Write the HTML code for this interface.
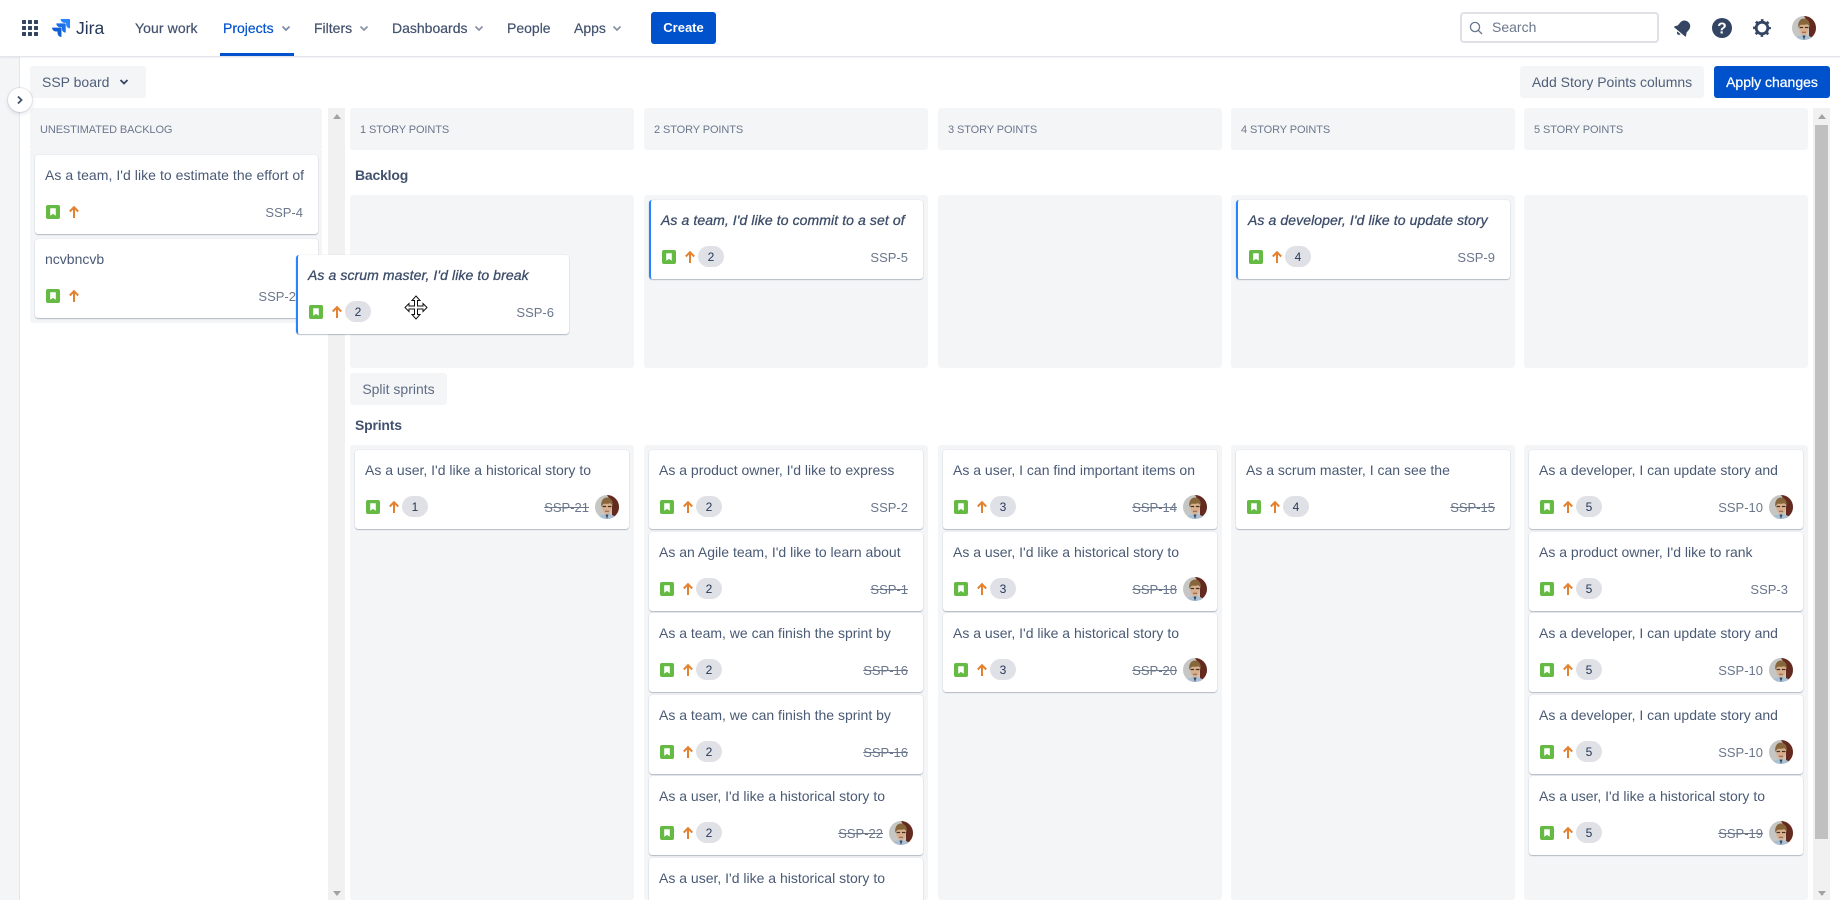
<!DOCTYPE html>
<html lang="en">
<head>
<meta charset="utf-8">
<title>Jira - SSP board</title>
<style>
*{box-sizing:border-box}
html,body{margin:0;padding:0;width:1840px;height:900px;overflow:hidden;background:#fff}
body{font-family:"Liberation Sans",Arial,sans-serif;color:#42526e;position:relative}
.a{position:absolute}
#stripe{left:0;top:56px;width:20px;height:844px;background:#f4f5f7;border-right:1px solid #e4e6ea}
#hdr{left:0;top:0;width:1840px;height:57px;background:#fff;border-bottom:1px solid #e3e5ea;box-shadow:0 1px 1px rgba(9,30,66,.06);z-index:5}
.nav{position:absolute;top:19px;font-size:14px;line-height:18px;font-weight:400;color:#42526e;white-space:nowrap;-webkit-text-stroke:.2px #42526e}
.chev{position:absolute;top:25px;width:10px;height:7px}
.btn{position:absolute;background:#f4f5f7;border-radius:3px;font-size:14px;color:#505f79;line-height:32px;white-space:nowrap}
.col{position:absolute;background:#f4f5f7;border-radius:3px;width:284px}
.ch{top:108px;height:42px;font-size:11px;line-height:45px;padding-left:10px;color:#6b778c;letter-spacing:-.1px;white-space:nowrap}
.sec{position:absolute;font-size:14px;font-weight:700;color:#42526e;line-height:18px;letter-spacing:-.2px}
.card{position:absolute;width:274px;height:79px;background:#fff;border-radius:3px;box-shadow:0 1px 1px rgba(9,30,66,.25),0 0 1px rgba(9,30,66,.2)}
.card .t{position:absolute;left:10px;top:11px;font-size:14px;line-height:19px;color:#4a5a75;white-space:nowrap}
.card .i{position:absolute;left:11px;top:50px;width:14px;height:14px}
.card .u{position:absolute;left:33px;top:50px;width:12px;height:14px}
.card .b{position:absolute;left:47px;top:46px;width:26px;height:21px;border-radius:11px;background:#dfe1e6;color:#253858;font-size:12px;line-height:22px;text-align:center}
.card .k{position:absolute;right:15px;top:49px;font-size:13px;line-height:18px;color:#6b778c;white-space:nowrap}
.card .k.s{text-decoration:line-through}
.card .k.w{right:40px}
.card .v{position:absolute;left:240px;top:45px;width:24px;height:24px}
.card.m{border-left:2px solid #2684ff}
.card.m .t{left:10px;font-style:italic;font-weight:400;color:#3d4d69;letter-spacing:.09px;-webkit-text-stroke:.3px #3d4d69}
.sb{position:absolute;top:108px;width:17px;height:792px;background:#f1f1f1}
.tri{position:absolute;left:5px;width:0;height:0;border-left:4px solid transparent;border-right:4px solid transparent}
</style>
</head>
<body>
<svg width="0" height="0" style="position:absolute">
<defs>
<g id="st"><rect width="14" height="14" rx="2" fill="#65ba43"/><path d="M4.2 3.2h5.6v7.6L7 8.9l-2.800 1.900z" fill="#fff"/></g>
<g id="up"><path d="M6 13V2.500M1.800 6.500L6 2.200l4.200 4.300" fill="none" stroke="#e4812f" stroke-width="2"/></g>
<clipPath id="cc"><circle cx="12" cy="12" r="12"/></clipPath>
<g id="av"><g clip-path="url(#cc)"><rect width="24" height="24" fill="#c6c6c4"/><path d="M12 0h12v24h-7V8z" fill="#642a20"/><path d="M3 24c.5-3.500 3.500-4.500 9-4.500s8 1.200 9 4.500z" fill="#a9c0d4"/><path d="M10.500 19.500h3L12 24z" fill="#3a4658"/><ellipse cx="12" cy="12.500" rx="4.700" ry="6.500" fill="#d9b08f"/><path d="M6.300 12C5.500 5.500 8.500 2.500 12 2.500s6.500 3 5.700 9.500c-.5-2.300-1.500-3.500-2.700-3.800-2.300.8-4.800.5-6.200.5-.8.800-2 1.800-2.500 3.300z" fill="#86663a"/><path d="M7.500 11.500h3.600M12.900 11.500h3.600" stroke="#43301f" stroke-width="1.300"/><path d="M10 16.200h4" stroke="#8d5a45" stroke-width="1"/></g></g>
</defs>
</svg>

<div id="stripe" class="a"></div>

<div id="hdr" class="a">
  <svg class="a" style="left:22px;top:20px" width="16" height="16" fill="#344563"><rect width="4" height="4" rx=".6"/><rect x="6" width="4" height="4" rx=".6"/><rect x="12" width="4" height="4" rx=".6"/><rect y="6" width="4" height="4" rx=".6"/><rect x="6" y="6" width="4" height="4" rx=".6"/><rect x="12" y="6" width="4" height="4" rx=".6"/><rect y="12" width="4" height="4" rx=".6"/><rect x="6" y="12" width="4" height="4" rx=".6"/><rect x="12" y="12" width="4" height="4" rx=".6"/></svg>
  <svg class="a" style="left:52px;top:19px" width="18" height="18" viewBox="0 0 24 24"><path fill="#2684ff" d="M23.013 0H11.455a5.215 5.215 0 0 0 5.215 5.215h2.129v2.057A5.215 5.215 0 0 0 24 12.483V1.005A1.001 1.001 0 0 0 23.013 0Z"/><path fill="#1a6fe6" d="M17.294 5.757H5.736a5.215 5.215 0 0 0 5.215 5.214h2.129v2.058a5.218 5.218 0 0 0 5.215 5.214V6.758a1.001 1.001 0 0 0-1.001-1.001z"/><path fill="#0f5fd8" d="M11.571 11.513H0a5.218 5.218 0 0 0 5.232 5.215h2.13v2.057A5.215 5.215 0 0 0 12.575 24V12.518a1.005 1.005 0 0 0-1.005-1.005z"/></svg>
  <div class="a" style="left:76px;top:15px;font-size:17.5px;line-height:26px;color:#253858">Jira</div>

  <div class="nav" style="left:135px;letter-spacing:.1px">Your work</div>
  <div class="nav" style="left:223px;color:#0052cc;-webkit-text-stroke:.2px #0052cc">Projects</div>
  <svg class="chev" style="left:281px" viewBox="0 0 10 7"><path d="M1.500 1.500L5 5l3.500-3.500" fill="none" stroke="#7d8ba8" stroke-width="1.700"/></svg>
  <div class="a" style="left:220px;top:53px;width:74px;height:3px;background:#0052cc"></div>
  <div class="nav" style="left:314px">Filters</div>
  <svg class="chev" style="left:359px" viewBox="0 0 10 7"><path d="M1.500 1.500L5 5l3.500-3.500" fill="none" stroke="#8993a4" stroke-width="1.700"/></svg>
  <div class="nav" style="left:392px">Dashboards</div>
  <svg class="chev" style="left:474px" viewBox="0 0 10 7"><path d="M1.500 1.500L5 5l3.500-3.500" fill="none" stroke="#8993a4" stroke-width="1.700"/></svg>
  <div class="nav" style="left:507px">People</div>
  <div class="nav" style="left:574px">Apps</div>
  <svg class="chev" style="left:612px" viewBox="0 0 10 7"><path d="M1.500 1.500L5 5l3.500-3.500" fill="none" stroke="#8993a4" stroke-width="1.700"/></svg>
  <div class="a" style="left:651px;top:12px;width:65px;height:32px;background:#0052cc;border-radius:3px;color:#fff;font-size:13px;font-weight:700;line-height:32px;text-align:center">Create</div>

  <div class="a" style="left:1460px;top:12px;width:199px;height:31px;border:2px solid #dfe1e6;border-radius:4px;background:#fff"></div>
  <svg class="a" style="left:1469px;top:21px" width="14" height="14" viewBox="0 0 14 14"><circle cx="6" cy="6" r="4.600" fill="none" stroke="#6b778c" stroke-width="1.300"/><path d="M9.400 9.400L13 13" stroke="#6b778c" stroke-width="1.300"/></svg>
  <div class="a" style="left:1492px;top:18px;font-size:14px;line-height:18px;color:#6b778c">Search</div>

  <svg class="a" style="left:1673px;top:18px" width="20" height="20" viewBox="0 0 24 24"><g transform="rotate(40 12 12)" fill="#344563"><path d="M12 2.500c-3.900 0-6.800 2.800-6.800 6.500v4.500L3 17v1.200h18V17l-2.200-3.500V9c0-3.700-2.900-6.500-6.800-6.500z"/><path d="M9.500 19.500a2.500 2.500 0 0 0 5 0z"/></g></svg>
  <svg class="a" style="left:1712px;top:18px" width="20" height="20" viewBox="0 0 20 20"><circle cx="10" cy="10" r="10" fill="#344563"/><text x="10" y="15.500" text-anchor="middle" font-family="Liberation Sans,sans-serif" font-size="15.500" font-weight="700" fill="#fff">?</text></svg>
  <svg class="a" style="left:1752px;top:18px" width="20" height="20" viewBox="0 0 20 20"><circle cx="10" cy="10" r="5.800" fill="none" stroke="#344563" stroke-width="2.800"/><circle cx="10" cy="10" r="7.800" fill="none" stroke="#344563" stroke-width="2.200" stroke-dasharray="2.600 3.526" stroke-dashoffset="1.300"/></svg>
  <svg class="a" style="left:1792px;top:16px" width="24" height="24" viewBox="0 0 24 24"><use href="#av"/></svg>
</div>

<div class="a" style="left:8px;top:88px;width:24px;height:24px;border-radius:50%;background:#fff;box-shadow:0 0 0 1px rgba(9,30,66,.08),0 2px 4px rgba(9,30,66,.12);z-index:6">
  <svg class="a" style="left:8px;top:7px" width="8" height="10" viewBox="0 0 8 10"><path d="M2 1.500L5.500 5 2 8.500" fill="none" stroke="#42526e" stroke-width="1.800"/></svg>
</div>

<div class="btn" style="left:30px;top:66px;width:116px;padding-left:12px">SSP board
  <svg class="a" style="left:89px;top:12px" width="10" height="8" viewBox="0 0 10 8"><path d="M1.500 2L5 5.500 8.500 2" fill="none" stroke="#344563" stroke-width="1.800"/></svg>
</div>
<div class="btn" style="left:1520px;top:66px;width:184px;text-align:center;color:#505f79">Add Story Points columns</div>
<div class="btn" style="left:1714px;top:66px;width:116px;background:#0052cc;color:#fff;text-align:center;-webkit-text-stroke:.25px #fff">Apply changes</div>

<!-- Scrollbars -->
<div class="sb" style="left:328px"><div class="tri" style="top:6px;border-bottom:5px solid #a3a3a3"></div><div class="tri" style="bottom:4px;border-top:5px solid #a3a3a3"></div></div>
<div class="sb" style="left:1813px"><div class="tri" style="top:6px;border-bottom:5px solid #a3a3a3"></div><div class="a" style="left:2px;top:17px;width:13px;height:714px;background:#c0c0c0"></div><div class="tri" style="bottom:4px;border-top:5px solid #a3a3a3"></div></div>

<!-- Column headers -->
<div class="col ch" style="left:30px;width:292px;padding-left:10px">UNESTIMATED BACKLOG</div>
<div class="col ch" style="left:350px">1 STORY POINTS</div>
<div class="col ch" style="left:644px">2 STORY POINTS</div>
<div class="col ch" style="left:938px">3 STORY POINTS</div>
<div class="col ch" style="left:1231px">4 STORY POINTS</div>
<div class="col ch" style="left:1524px">5 STORY POINTS</div>

<!-- Unestimated column body -->
<div class="col" style="left:30px;top:150px;width:292px;height:173px;border-radius:0 0 3px 3px"></div>
<div class="card" style="left:35px;top:155px;width:283px"><div class="t" style="letter-spacing:.05px">As a team, I'd like to estimate the effort of</div><svg class="i"><use href="#st"/></svg><svg class="u" viewBox="0 0 12 14"><use href="#up"/></svg><div class="k">SSP-4</div></div>
<div class="card" style="left:35px;top:239px;width:283px"><div class="t">ncvbncvb</div><svg class="i"><use href="#st"/></svg><svg class="u" viewBox="0 0 12 14"><use href="#up"/></svg><div class="k" style="right:22px">SSP-2</div></div>

<!-- Backlog row -->
<div class="sec" style="left:355px;top:166px">Backlog</div>
<div class="col" style="left:350px;top:195px;height:173px"></div>
<div class="col" style="left:644px;top:195px;height:173px"></div>
<div class="col" style="left:938px;top:195px;height:173px"></div>
<div class="col" style="left:1231px;top:195px;height:173px"></div>
<div class="col" style="left:1524px;top:195px;height:173px"></div>
<div class="card m" style="left:649px;top:200px"><div class="t">As a team, I'd like to commit to a set of</div><svg class="i"><use href="#st"/></svg><svg class="u" viewBox="0 0 12 14"><use href="#up"/></svg><div class="b">2</div><div class="k">SSP-5</div></div>
<div class="card m" style="left:1236px;top:200px"><div class="t">As a developer, I'd like to update story</div><svg class="i"><use href="#st"/></svg><svg class="u" viewBox="0 0 12 14"><use href="#up"/></svg><div class="b">4</div><div class="k">SSP-9</div></div>

<div class="btn" style="left:350px;top:373px;width:97px;text-align:center;color:#5e6c84">Split sprints</div>
<div class="sec" style="left:355px;top:416px">Sprints</div>

<!-- Sprints row -->
<div class="col" style="left:350px;top:445px;height:455px"></div>
<div class="col" style="left:644px;top:445px;height:455px"></div>
<div class="col" style="left:938px;top:445px;height:455px"></div>
<div class="col" style="left:1231px;top:445px;height:455px"></div>
<div class="col" style="left:1524px;top:445px;height:455px"></div>

<!-- Col 1 -->
<div class="card" style="left:355px;top:450px"><div class="t">As a user, I'd like a historical story to</div><svg class="i"><use href="#st"/></svg><svg class="u" viewBox="0 0 12 14"><use href="#up"/></svg><div class="b">1</div><div class="k s w">SSP-21</div><svg class="v" viewBox="0 0 24 24"><use href="#av"/></svg></div>

<!-- Col 2 -->
<div class="card" style="left:649px;top:450px"><div class="t">As a product owner, I'd like to express</div><svg class="i"><use href="#st"/></svg><svg class="u" viewBox="0 0 12 14"><use href="#up"/></svg><div class="b">2</div><div class="k">SSP-2</div></div>
<div class="card" style="left:649px;top:532px"><div class="t">As an Agile team, I'd like to learn about</div><svg class="i"><use href="#st"/></svg><svg class="u" viewBox="0 0 12 14"><use href="#up"/></svg><div class="b">2</div><div class="k s">SSP-1</div></div>
<div class="card" style="left:649px;top:613px"><div class="t">As a team, we can finish the sprint by</div><svg class="i"><use href="#st"/></svg><svg class="u" viewBox="0 0 12 14"><use href="#up"/></svg><div class="b">2</div><div class="k s">SSP-16</div></div>
<div class="card" style="left:649px;top:695px"><div class="t">As a team, we can finish the sprint by</div><svg class="i"><use href="#st"/></svg><svg class="u" viewBox="0 0 12 14"><use href="#up"/></svg><div class="b">2</div><div class="k s">SSP-16</div></div>
<div class="card" style="left:649px;top:776px"><div class="t">As a user, I'd like a historical story to</div><svg class="i"><use href="#st"/></svg><svg class="u" viewBox="0 0 12 14"><use href="#up"/></svg><div class="b">2</div><div class="k s w">SSP-22</div><svg class="v" viewBox="0 0 24 24"><use href="#av"/></svg></div>
<div class="card" style="left:649px;top:858px"><div class="t">As a user, I'd like a historical story to</div></div>

<!-- Col 3 -->
<div class="card" style="left:943px;top:450px"><div class="t">As a user, I can find important items on</div><svg class="i"><use href="#st"/></svg><svg class="u" viewBox="0 0 12 14"><use href="#up"/></svg><div class="b">3</div><div class="k s w">SSP-14</div><svg class="v" viewBox="0 0 24 24"><use href="#av"/></svg></div>
<div class="card" style="left:943px;top:532px"><div class="t">As a user, I'd like a historical story to</div><svg class="i"><use href="#st"/></svg><svg class="u" viewBox="0 0 12 14"><use href="#up"/></svg><div class="b">3</div><div class="k s w">SSP-18</div><svg class="v" viewBox="0 0 24 24"><use href="#av"/></svg></div>
<div class="card" style="left:943px;top:613px"><div class="t">As a user, I'd like a historical story to</div><svg class="i"><use href="#st"/></svg><svg class="u" viewBox="0 0 12 14"><use href="#up"/></svg><div class="b">3</div><div class="k s w">SSP-20</div><svg class="v" viewBox="0 0 24 24"><use href="#av"/></svg></div>

<!-- Col 4 -->
<div class="card" style="left:1236px;top:450px"><div class="t">As a scrum master, I can see the</div><svg class="i"><use href="#st"/></svg><svg class="u" viewBox="0 0 12 14"><use href="#up"/></svg><div class="b">4</div><div class="k s">SSP-15</div></div>

<!-- Col 5 -->
<div class="card" style="left:1529px;top:450px"><div class="t">As a developer, I can update story and</div><svg class="i"><use href="#st"/></svg><svg class="u" viewBox="0 0 12 14"><use href="#up"/></svg><div class="b">5</div><div class="k w">SSP-10</div><svg class="v" viewBox="0 0 24 24"><use href="#av"/></svg></div>
<div class="card" style="left:1529px;top:532px"><div class="t">As a product owner, I'd like to rank</div><svg class="i"><use href="#st"/></svg><svg class="u" viewBox="0 0 12 14"><use href="#up"/></svg><div class="b">5</div><div class="k">SSP-3</div></div>
<div class="card" style="left:1529px;top:613px"><div class="t">As a developer, I can update story and</div><svg class="i"><use href="#st"/></svg><svg class="u" viewBox="0 0 12 14"><use href="#up"/></svg><div class="b">5</div><div class="k w">SSP-10</div><svg class="v" viewBox="0 0 24 24"><use href="#av"/></svg></div>
<div class="card" style="left:1529px;top:695px"><div class="t">As a developer, I can update story and</div><svg class="i"><use href="#st"/></svg><svg class="u" viewBox="0 0 12 14"><use href="#up"/></svg><div class="b">5</div><div class="k w">SSP-10</div><svg class="v" viewBox="0 0 24 24"><use href="#av"/></svg></div>
<div class="card" style="left:1529px;top:776px"><div class="t">As a user, I'd like a historical story to</div><svg class="i"><use href="#st"/></svg><svg class="u" viewBox="0 0 12 14"><use href="#up"/></svg><div class="b">5</div><div class="k s w">SSP-19</div><svg class="v" viewBox="0 0 24 24"><use href="#av"/></svg></div>

<!-- Dragged card -->
<div class="card m" style="left:296px;top:255px;width:273px;z-index:3"><div class="t">As a scrum master, I'd like to break</div><svg class="i"><use href="#st"/></svg><svg class="u" viewBox="0 0 12 14"><use href="#up"/></svg><div class="b">2</div><div class="k">SSP-6</div></div>

<!-- Move cursor -->
<svg class="a" style="left:404px;top:295px;z-index:4" width="24" height="25" viewBox="0 0 24 25"><path d="M12 1l4 4.500h-2.500v5.500H19V8.500l4 4-4 4V14h-5.500v5.500H16l-4 4.500-4-4.500h2.500V14H5v2.500l-4-4 4-4V11h5.500V5.500H8z" fill="#fff" stroke="#111" stroke-width="1"/></svg>
</body>
</html>
